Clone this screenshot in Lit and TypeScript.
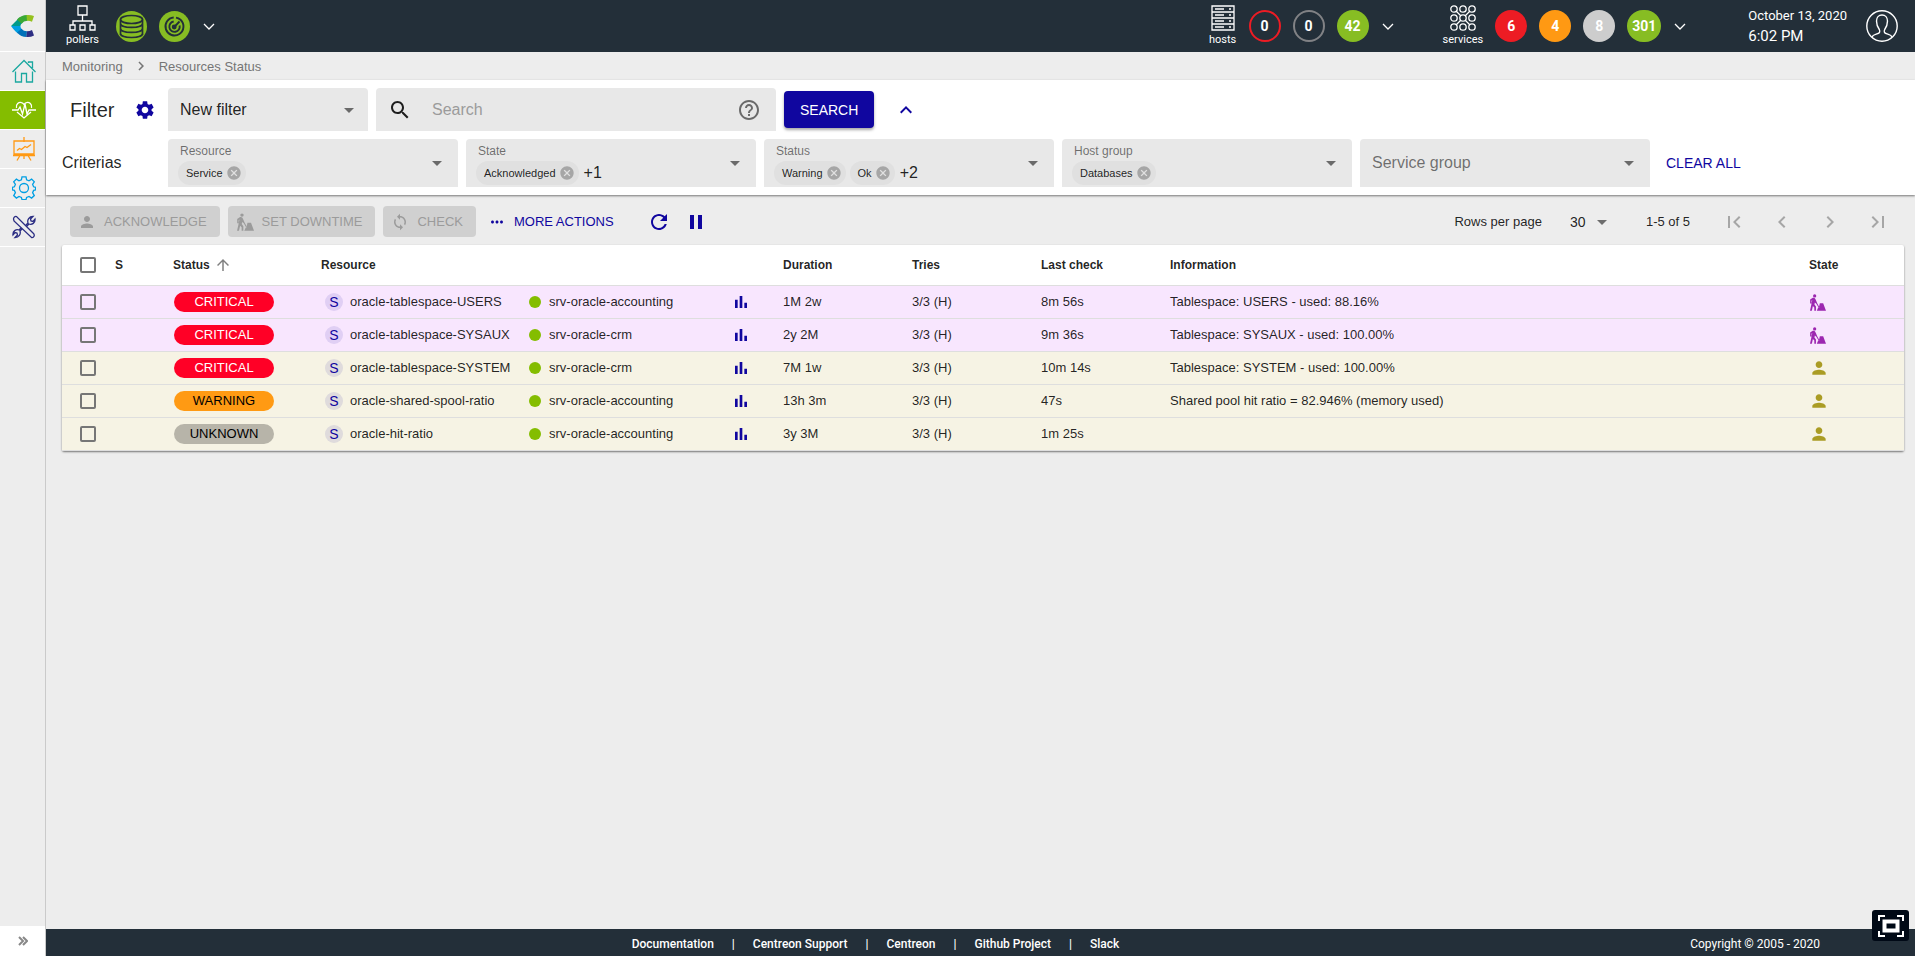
import { LitElement, html, css, svg, nothing, type SVGTemplateResult } from "lit";
import { customElement, property } from "lit/decorators.js";
import { classMap } from "lit/directives/class-map.js";

/* Solid 24-unit glyphs */
const GLYPHS: Record<string, string> = {
  gear: "M19.14 12.94c.04-.3.06-.61.06-.94 0-.32-.02-.64-.07-.94l2.03-1.58c.18-.14.23-.41.12-.61l-1.92-3.32c-.12-.22-.37-.29-.59-.22l-2.39.96c-.5-.38-1.03-.7-1.62-.94l-.36-2.54c-.04-.24-.24-.41-.48-.41h-3.84c-.24 0-.43.17-.47.41l-.36 2.54c-.59.24-1.13.57-1.62.94l-2.39-.96c-.22-.08-.47 0-.59.22L2.74 8.87c-.12.21-.08.47.12.61l2.03 1.58c-.05.3-.09.63-.09.94s.02.64.07.94l-2.03 1.58c-.18.14-.23.41-.12.61l1.92 3.32c.12.22.37.29.59.22l2.39-.96c.5.38 1.03.7 1.62.94l.36 2.54c.05.24.24.41.48.41h3.84c.24 0 .44-.17.47-.41l.36-2.54c.59-.24 1.13-.56 1.62-.94l2.39.96c.22.08.47 0 .59-.22l1.92-3.32c.12-.22.07-.47-.12-.61l-2.01-1.58zM12 15.6c-1.98 0-3.6-1.62-3.6-3.6s1.62-3.6 3.6-3.6 3.6 1.62 3.6 3.6-1.62 3.6-3.6 3.6z",
  search: "M15.5 14h-.79l-.28-.27C15.41 12.59 16 11.11 16 9.5 16 5.91 13.09 3 9.5 3S3 5.91 3 9.5 5.91 16 9.5 16c1.61 0 3.09-.59 4.23-1.57l.27.28v.79l5 4.99L20.49 19l-4.99-5zm-6 0C7.01 14 5 11.99 5 9.5S7.01 5 9.5 5 14 7.01 14 9.5 11.99 14 9.5 14z",
  help: "M11 18h2v-2h-2v2zm1-16C6.48 2 2 6.48 2 12s4.48 10 10 10 10-4.48 10-10S17.52 2 12 2zm0 18c-4.41 0-8-3.59-8-8s3.59-8 8-8 8 3.59 8 8-3.59 8-8 8zm0-14c-2.21 0-4 1.79-4 4h2c0-1.1.9-2 2-2s2 .9 2 2c0 2-3 1.75-3 5h2c0-2.25 3-2.5 3-5 0-2.21-1.79-4-4-4z",
  up: "M7.41 15.41 12 10.83l4.59 4.58L18 14l-6-6-6 6z",
  right: "M10 6 8.59 7.41 13.17 12l-4.58 4.59L10 18l6-6z",
  left: "M15.41 7.41 14 6l-6 6 6 6 1.41-1.41L10.83 12z",
  first: "M18.41 16.59 13.82 12l4.59-4.59L17 6l-6 6 6 6zM6 6h2v12H6z",
  last: "M5.59 7.41 10.18 12l-4.59 4.59L7 18l6-6-6-6zM16 6h2v12h-2z",
  drop: "M7 10l5 5 5-5z",
  cancel: "M12 2C6.47 2 2 6.47 2 12s4.47 10 10 10 10-4.47 10-10S17.53 2 12 2zm5 13.59L15.59 17 12 13.41 8.41 17 7 15.59 10.59 12 7 8.41 8.41 7 12 10.59 15.59 7 17 8.41 13.41 12 17 15.59z",
  person: "M12 12c2.21 0 4-1.79 4-4s-1.79-4-4-4-4 1.79-4 4 1.79 4 4 4zm0 2c-2.67 0-8 1.34-8 4v2h16v-2c0-2.66-5.33-4-8-4z",
  worker: "M8 .5a2.300 2.300 0 1 0 0 4.600A2.300 2.300 0 0 0 8 .5zM5.400 5.400 1.600 7.900V13.500h2V9.200l1-.5-1.400 7L1.400 23.500h2.600l1.500-6.500 2 2v4.500h2.300v-6l-2.100-2.800.6-2.600 2 1.500 3.300 5.600 1.100-.6-3.100-5.700-2.100-4.700C8.800 5.900 7.400 4.900 5.400 5.400zM15.300 13h4.700l4 10.500H11l2-4.300 1.100-.6z",
  sync: "M12 4V1L8 5l4 4V6c3.310 0 6 2.690 6 6 0 1.010-.25 1.970-.7 2.800l1.460 1.460C19.540 15.030 20 13.570 20 12c0-4.420-3.580-8-8-8zm0 14c-3.310 0-6-2.690-6-6 0-1.010.25-1.970.7-2.800L5.240 7.740C4.460 8.970 4 10.430 4 12c0 4.420 3.580 8 8 8v3l4-4-4-4v3z",
  dots: "M6 10c-1.100 0-2 .9-2 2s.9 2 2 2 2-.9 2-2-.9-2-2-2zm12 0c-1.100 0-2 .9-2 2s.9 2 2 2 2-.9 2-2-.9-2-2-2zm-6 0c-1.100 0-2 .9-2 2s.9 2 2 2 2-.9 2-2-.9-2-2-2z",
  refresh: "M17.650 6.350C16.200 4.900 14.210 4 12 4c-4.420 0-7.990 3.580-7.990 8s3.570 8 7.990 8c3.730 0 6.840-2.550 7.730-6h-2.080c-.82 2.330-3.040 4-5.650 4-3.310 0-6-2.690-6-6s2.690-6 6-6c1.660 0 3.140.69 4.220 1.780L13 11h7V4l-2.350 2.350z",
  pause: "M6 19h4V5H6v14zm8-14v14h4V5h-4z",
  arrowUp: "M4 12l1.410 1.410L11 7.830V20h2V7.830l5.580 5.590L20 12l-8-8z",
  chart: "M3 8.500h4v12.500H3zM10 3h4v18h-4zM17 13h4v8h-4z",
};

const glyph = (name: string, size = 24) => html`
  <svg class="glyph" width=${size} height=${size} viewBox="0 0 24 24" aria-hidden="true">
    <path fill="currentColor" d=${GLYPHS[name]}></path>
  </svg>`;

/* Thin outline drawings */
const outline = (body: SVGTemplateResult, w: number, h: number, stroke = 1.5) => html`
  <svg class="glyph" width=${w} height=${h} viewBox="0 0 ${w} ${h}" fill="none"
    stroke="currentColor" stroke-width=${stroke} aria-hidden="true">${body}</svg>`;

const chevron = () => outline(svg`<path d="M1 2l5 5 5-5"/>`, 12, 9, 1.3);

const logo = html`
  <svg class="glyph" width="24" height="24" viewBox="0 0 24 24" aria-hidden="true">
    <path fill="#009a8a" d="M0 12 8.500 3.500 11.500 8.500 Q9.500 10 9.400 12 Z"></path>
    <path fill="#3aa935" d="M6 5.500 Q10 1 16 1 L16.500 6.800 Q12.500 7 10.600 9.800 Z"></path>
    <path fill="#95c11f" d="M15.500 1 Q19.500 .6 23 2 L21 7.800 Q18.800 6.600 16 6.800 Z"></path>
    <path fill="#009fe3" d="M0 12 9.400 12 Q9.500 14 11 15.500 L7 19.500 Q4 17.500 0 12 Z"></path>
    <path fill="#0071b9" d="M6 18.500 10.500 14.800 Q12.500 17.300 16 17.300 L15.500 23 Q10 23 6 18.500 Z"></path>
    <path fill="#2d2e83" d="M16 17.300 Q18.800 17.300 21 16 L23 21.500 Q19.500 23.400 15.300 23 Z"></path>
  </svg>`;

const NAV = [
  { id: "home", label: "Home", art: svg`<path d="M.5 13 12 1.500 23.500 13M16.500 4V3H20.500v6M3.500 12.500V23h6v-8.500h5V23h6V12.500"/>` },
  { id: "monitoring", label: "Monitoring", art: svg`<path d="M0 12h6l2-3 2.500 7L13 6l2 10 2-4h7M4.500 10C3.500 6 7 3.800 9.500 4.600 11 5 12 6.500 12 6.500S13 5 14.500 4.600C17 3.800 20.500 6 19.500 10M5 14l7 6 7-6"/>` },
  { id: "reporting", label: "Reporting", art: svg`<path d="M2 4h20v13H2zM12 0v5M5 13.500l2.500-2 2 1 3.500-3 2 1L19 7.500M1 18.500h22M8 18.500 5 23.500M12 18.500V22M16 18.500l3 5"/>` },
  { id: "configuration", label: "Configuration", art: svg`<circle cx="12" cy="12" r="4.500"/><path d="M10 .8h4l.6 3 2.400 1 2.600-1.700 2.700 2.700-1.700 2.600 1 2.400 2 .5v2.600l-2 .5-1 2.300 1.700 2.900-2.700 2.500-2.600-1.700-2.400 1-.6 2.300h-4l-.6-2.300-2.400-1-2.600 1.700-2.700-2.500 1.700-2.900-1-2.300-2-.5v-2.600l2-.5 1-2.400L1.700 5.800l2.700-2.700L7 4.800l2.400-1z"/>` },
  { id: "administration", label: "Administration", art: svg`<path d="M1.500 4c0-1.500 1.500-3 3-2.500L21.500 18.500c1.500 1.500.5 4.500-2 4L2 6zM14 10l2-2c-1-3 1-6.500 5-6.500L18.500 4l.5 2 2 .5L23 4c.5 4-3 6-6 5l-2 2M10 14l-2 2c1 3-1 6.500-5 6.500L5.500 20 5 18l-2-.5L1 20c-.5-4 3-6 6-5l2-2"/>` },
];

const CRITERIA = [
  { label: "Resource", chips: ["Service"], more: "" },
  { label: "State", chips: ["Acknowledged"], more: "+1" },
  { label: "Status", chips: ["Warning", "Ok"], more: "+2" },
  { label: "Host group", chips: ["Databases"], more: "" },
  { label: "Service group", chips: [], more: "" },
];

interface Row {
  status: "critical" | "warning" | "unknown";
  name: string; host: string; duration: string; check: string; info: string;
  state: "downtime" | "ack";
}
const ROWS: Row[] = [
  { status: "critical", name: "oracle-tablespace-USERS", host: "srv-oracle-accounting", duration: "1M 2w", check: "8m 56s", info: "Tablespace: USERS - used: 88.16%", state: "downtime" },
  { status: "critical", name: "oracle-tablespace-SYSAUX", host: "srv-oracle-crm", duration: "2y 2M", check: "9m 36s", info: "Tablespace: SYSAUX - used: 100.00%", state: "downtime" },
  { status: "critical", name: "oracle-tablespace-SYSTEM", host: "srv-oracle-crm", duration: "7M 1w", check: "10m 14s", info: "Tablespace: SYSTEM - used: 100.00%", state: "ack" },
  { status: "warning", name: "oracle-shared-spool-ratio", host: "srv-oracle-accounting", duration: "13h 3m", check: "47s", info: "Shared pool hit ratio = 82.946% (memory used)", state: "ack" },
  { status: "unknown", name: "oracle-hit-ratio", host: "srv-oracle-accounting", duration: "3y 3M", check: "1m 25s", info: "", state: "ack" },
];

const base = css`
  * { box-sizing: border-box; }
  button { border: 0; background: none; padding: 0; margin: 0; font: inherit; color: inherit; cursor: pointer; display: inline-flex; align-items: center; justify-content: center; }
  input, select { font: inherit; color: inherit; margin: 0; }
  a { color: inherit; text-decoration: none; }
  .glyph { display: block; flex: none; }
`;

@customElement("side-nav")
export class SideNav extends LitElement {
  static styles = [base, css`
    :host { display: flex; flex-direction: column; width: 46px; flex: none; background: #ededed; border-right: 1px solid #cacaca; }
    .logo, .item { display: flex; align-items: center; justify-content: center; border-bottom: 1px solid #fff; }
    .logo { height: 52px; }
    .item { height: 39px; padding-left: 3px; }
    .home { color: #1ba8a0; }
    .monitoring { background: #84bd00; color: #fff; }
    .reporting { color: #ff9913; }
    .configuration { color: #009fe3; }
    .administration { color: #2b2d83; }
    .expand { margin-top: auto; height: 30px; background: #fff; color: #888; }
  `];
  render() {
    return html`
      <a class="logo" href="#" aria-label="Centreon">${logo}</a>
      <nav>${NAV.map((n) => html`
        <a class="item ${n.id}" href="#${n.id}" aria-label=${n.label}>${outline(n.art, 24, 24, 1.3)}</a>`)}
      </nav>
      <button class="expand" aria-label="Expand menu">${outline(svg`<path d="M1 1l4 4-4 4M5 1l4 4-4 4"/>`, 10, 10, 2)}</button>`;
  }
}

@customElement("top-bar")
export class TopBar extends LitElement {
  static styles = [base, css`
    :host { display: flex; align-items: center; height: 52px; padding: 0 17px 0 20px; background: #232f39; color: #fff; font: 11px/14px Roboto, sans-serif; }
    .group { display: flex; align-items: center; gap: 12px; }
    .entry { display: flex; flex-direction: column; align-items: center; gap: 2px; min-width: 28px; }
    .pollers { margin-right: 5px; }
    .disc { width: 31px; height: 31px; border-radius: 50%; background: #87bd23; color: #232f39; }
    .right { margin-left: auto; }
    .services { margin-left: 48px; }
    .count { min-width: 32px; height: 32px; padding: 0 5px; border-radius: 16px; display: flex; align-items: center; justify-content: center; font-size: 14px; font-weight: 700; }
    .ring-red { border: 2px solid #ed1c24; }
    .ring-gray { border: 2px solid #818285; }
    .green { background: #87bd23; }
    .red { background: #ed1c24; }
    .orange { background: #ff9913; }
    .gray { background: #cdcdcd; }
    .more { padding: 8px 1px; }
    .clock { margin: 0 19px 0 61px; font-size: 13px; line-height: 20px; white-space: nowrap; }
    .time { display: block; font-size: 15px; }
  `];
  render() {
    return html`
      <div class="group">
        <a class="entry pollers" href="#pollers">
          ${outline(svg`<path d="M9 1h9v9H9zM13.500 10v6M4 20v-4h19v4M1 20h5v5H1zM11 20h5v5h-5zM21 20h5v5h-5z"/>`, 27, 26, 1.3)}
          <span>pollers</span>
        </a>
        <button class="disc" aria-label="Database status">
          ${outline(svg`<ellipse cx="15.500" cy="8.500" rx="11" ry="4"/><path d="M4.500 8.500V24M26.500 8.500V24M4.500 12.500c0 5.300 22 5.300 22 0M4.500 17.500c0 5.300 22 5.300 22 0M4.500 22.500c0 5.300 22 5.300 22 0"/>`, 31, 31, 1.7)}
        </button>
        <button class="disc" aria-label="Latency status">
          ${outline(svg`<path d="M14.700 6.500A9 9 0 1 0 21.500 8.800M14.700 10.500A5.200 5.200 0 1 0 20.600 14.500M21.500 8.800A9 9 0 0 0 17 6.600"/><path d="M14.300 17 20.500 10.500"/><circle cx="15.200" cy="16" r="1.500"/>`, 31, 31, 1.9)}
        </button>
        <button class="more" aria-label="Poller details">${chevron()}</button>
      </div>
      <div class="group right">
        <a class="entry" href="#hosts">
          ${outline(svg`<path d="M1 1h22v24H1zM1 7h22M1 13h22M1 19h22M4 4h9M4 10h9M4 16h9M4 22h9M18 4h2M18 10h2M18 16h2M18 22h2"/>`, 24, 26, 1.3)}
          <span>hosts</span>
        </a>
        <a class="count ring-red" href="#hosts-down">0</a>
        <a class="count ring-gray" href="#hosts-unreachable">0</a>
        <a class="count green" href="#hosts-up">42</a>
        <button class="more" aria-label="Host details">${chevron()}</button>
      </div>
      <div class="group services">
        <a class="entry" href="#services">
          ${outline(svg`${[4, 13, 22].map((x) => [4, 13, 22].map((y) => svg`<circle cx=${x} cy=${y} r="3.200"/>`))}<path d="M6 6l5 5M20 6l-5 5M6 20l5-5M20 20l-5-5"/>`, 26, 26, 1.3)}
          <span>services</span>
        </a>
        <a class="count red" href="#critical">6</a>
        <a class="count orange" href="#warning">4</a>
        <a class="count gray" href="#unknown">8</a>
        <a class="count green" href="#ok">301</a>
        <button class="more" aria-label="Service details">${chevron()}</button>
      </div>
      <time class="clock" datetime="2020-10-13T18:02">October 13, 2020<span class="time">6:02 PM</span></time>
      <button aria-label="Profile">
        ${outline(svg`<circle cx="16" cy="16" r="15.200"/><path d="M6 27c1-3 6-2.500 7.500-4.500.6-1 .3-2-.2-3C11.500 17 10.500 14 10.500 11c0-3.500 2.200-6 5.500-6s5.500 2.500 5.500 6c0 3-1 6-2.800 8.500-.5 1-.8 2-.2 3C20 24.500 25 24 26 27"/>`, 32, 32, 1.4)}
      </button>`;
  }
}

@customElement("criteria-field")
export class CriteriaField extends LitElement {
  @property() label = "";
  @property() more = "";
  @property({ attribute: false }) chips: string[] = [];
  static styles = [base, css`
    :host { display: flex; align-items: center; flex: 0 1 290px; min-width: 180px; height: 48px; padding: 0 9px 0 12px; background: #e8e8e8; border-radius: 4px 4px 0 0; color: rgba(0,0,0,.87); }
    .body { flex: 1; min-width: 0; }
    .label { display: block; font-size: 12px; line-height: 14px; color: rgba(0,0,0,.54); padding-top: 4px; }
    .values { display: flex; align-items: center; gap: 4px; height: 24px; margin: 3px 0 1px -2px; }
    .chip { display: flex; align-items: center; gap: 3px; height: 24px; padding: 0 4px 0 8px; border-radius: 12px; background: #e0e0e0; font-size: 11px; line-height: 14px; }
    .remove { color: #a6a6a6; }
    .more { padding-left: 1px; font-size: 16px; }
    .entry { flex: 1; width: 0; min-width: 0; border: 0; padding: 0; background: none; outline: none; font-size: 16px; }
    .entry::placeholder { color: rgba(0,0,0,.54); opacity: 1; }
    .wide { width: 100%; }
    .open { color: rgba(0,0,0,.54); }
  `];
  render() {
    const filled = this.chips.length > 0;
    return html`
      <div class="body">
        ${filled ? html`
          <label class="label" for="entry">${this.label}</label>
          <div class="values">
            ${this.chips.map((c) => html`
              <span class="chip">${c}<button class="remove" aria-label="Remove ${c}">${glyph("cancel", 16)}</button></span>`)}
            ${this.more ? html`<span class="more">${this.more}</span>` : nothing}
            <input id="entry" class="entry" type="text" />
          </div>` : html`<input class="entry wide" type="text" aria-label=${this.label} placeholder=${this.label} />`}
      </div>
      <button class="open" aria-label="Open ${this.label}">${glyph("drop", 24)}</button>`;
  }
}

@customElement("filter-panel")
export class FilterPanel extends LitElement {
  static styles = [base, css`
    :host { display: flex; flex-direction: column; gap: 8px; padding: 8px 16px; background: #fff; box-shadow: 0 1px 2px rgba(0,0,0,.5); color: rgba(0,0,0,.87); font-size: 16px; }
    .row { display: flex; align-items: center; gap: 8px; }
    .lead { flex: none; width: 98px; }
    .title { display: flex; align-items: center; justify-content: space-between; padding: 0 4px 0 8px; }
    h1 { margin: 0; font-size: 20px; font-weight: 400; line-height: 24px; }
    .blue { color: #10069f; }
    .field { display: flex; align-items: center; height: 43px; background: #e8e8e8; border-radius: 4px 4px 0 0; }
    .preset { flex: 0 1 200px; display: grid; align-items: center; }
    .preset select { grid-area: 1 / 1; width: 100%; height: 43px; padding: 0 32px 0 12px; border: 0; background: none; appearance: none; }
    .preset .arrow { grid-area: 1 / 1; justify-self: end; padding-right: 7px; color: rgba(0,0,0,.54); pointer-events: none; }
    .query { flex: 0 1 400px; gap: 20px; padding: 0 15px 0 12px; }
    .query input { flex: 1; min-width: 0; border: 0; background: none; outline: none; padding: 0; }
    .query input::placeholder { color: #9b9b9b; opacity: 1; }
    .help { color: rgba(0,0,0,.54); }
    .submit { height: 37px; padding: 0 16px; border-radius: 4px; background: #10069f; color: #fff; font-size: 14px; box-shadow: 0 2px 3px rgba(0,0,0,.35); }
    .fold { padding: 0 12px; }
    .clear { padding: 0 8px; font-size: 14px; white-space: nowrap; }
  `];
  render() {
    return html`
      <form class="row" @submit=${(e: Event) => e.preventDefault()}>
        <div class="lead title"><h1>Filter</h1><button type="button" class="blue" aria-label="Manage filters">${glyph("gear", 22)}</button></div>
        <div class="field preset">
          <select aria-label="Saved filter"><option>New filter</option></select>
          <span class="arrow">${glyph("drop")}</span>
        </div>
        <div class="field query">
          ${glyph("search", 24)}
          <input type="text" aria-label="Search" placeholder="Search" />
          <button type="button" class="help" aria-label="Search help">${glyph("help", 24)}</button>
        </div>
        <button class="submit">SEARCH</button>
        <button type="button" class="fold blue" aria-label="Hide criterias">${glyph("up", 24)}</button>
      </form>
      <div class="row">
        <span class="lead">Criterias</span>
        ${CRITERIA.map((c) => html`<criteria-field .label=${c.label} .chips=${c.chips} .more=${c.more}></criteria-field>`)}
        <button class="clear blue">CLEAR ALL</button>
      </div>`;
  }
}

@customElement("resource-list")
export class ResourceList extends LitElement {
  static styles = [base, css`
    :host { display: block; padding: 11px 11px 24px 16px; color: rgba(0,0,0,.87); font-size: 13px; line-height: 16px; }
    .bar { display: flex; align-items: center; gap: 8px; height: 31px; margin-bottom: 8px; padding-left: 8px; }
    .action { height: 31px; gap: 8px; padding: 0 13px 0 8px; border-radius: 4px; background: #d0d0d0; color: #9b9b9b; cursor: default; white-space: nowrap; }
    .flat { padding-left: 4px; background: none; color: #10069f; cursor: pointer; }
    .blue { display: flex; color: #10069f; }
    .tools { display: flex; align-items: center; gap: 13px; padding-left: 12px; }
    .pager { display: flex; align-items: center; margin-left: auto; padding-right: 14px; white-space: nowrap; }
    .size { display: grid; align-items: center; width: 44px; margin: 0 32px 0 28px; }
    .size select { grid-area: 1 / 1; width: 100%; border: 0; padding: 0; background: none; appearance: none; font-size: 14px; }
    .size .arrow { grid-area: 1 / 1; justify-self: end; color: rgba(0,0,0,.54); pointer-events: none; }
    .steps { display: flex; gap: 24px; margin-left: 32px; color: #a6a6a6; }
    table { width: 100%; table-layout: fixed; border-collapse: separate; border-spacing: 0; background: #fff; box-shadow: 0 1px 2px rgba(0,0,0,.5); border-radius: 2px; }
    th, td { padding: 0 8px; text-align: left; border-bottom: 1px solid #dedede; white-space: nowrap; overflow: hidden; text-overflow: ellipsis; }
    th { height: 41px; font-size: 12px; font-weight: 700; }
    td { height: 33px; }
    .c-pick { width: 45px; } .c-sev { width: 58px; } .c-status { width: 148px; } .c-name { width: 208px; }
    .c-host { width: 204px; } .c-graph { width: 50px; } .c-num { width: 129px; } .c-state { width: 103px; }
    .pick { padding: 0 0 0 18px; }
    .pick input { display: block; appearance: none; width: 16px; height: 16px; border: 2px solid #767676; border-radius: 2px; }
    .line { display: flex; align-items: center; }
    .sort { gap: 4px; color: inherit; font-weight: 700; }
    .sort .glyph { color: #808080; }
    .downtime { background: #f8e6fe; }
    .ack { background: #f6f3e4; }
    .pill { display: block; width: 100px; margin-left: 1px; border-radius: 10px; line-height: 20px; text-align: center; }
    .critical { background: #ff0026; color: #fff; }
    .warning { background: #ff9a13; color: #000; }
    .unknown { background: #b7b4a9; color: #000; }
    .kind { display: inline-flex; align-items: center; justify-content: center; width: 18px; height: 18px; margin: 0 7px 0 4px; border-radius: 50%; background: rgba(16,6,159,.1); color: #10069f; font-size: 14px; }
    .dot { width: 12px; height: 12px; margin-right: 8px; border-radius: 50%; background: #84bd00; }
    .purple { color: #9c27b0; }
    .olive { color: #aa9c24; }
  `];
  render() {
    return html`
      <div class="bar">
        <button class="action" disabled>${glyph("person", 18)}ACKNOWLEDGE</button>
        <button class="action" disabled>${glyph("worker", 18)}SET DOWNTIME</button>
        <button class="action" disabled>${glyph("sync", 18)}CHECK</button>
        <button class="action flat">${glyph("dots", 18)}MORE ACTIONS</button>
        <div class="tools">
          <button class="blue" aria-label="Refresh">${glyph("refresh", 24)}</button>
          <button class="blue" aria-label="Pause auto-refresh">${glyph("pause", 24)}</button>
        </div>
        <div class="pager">
          <label for="size">Rows per page</label>
          <span class="size"><select id="size"><option>30</option></select><span class="arrow">${glyph("drop", 24)}</span></span>
          <span>1-5 of 5</span>
          <div class="steps">
            <button disabled aria-label="First page">${glyph("first")}</button>
            <button disabled aria-label="Previous page">${glyph("left")}</button>
            <button disabled aria-label="Next page">${glyph("right")}</button>
            <button disabled aria-label="Last page">${glyph("last")}</button>
          </div>
        </div>
      </div>
      <table>
        <colgroup>
          <col class="c-pick" /><col class="c-sev" /><col class="c-status" /><col class="c-name" /><col class="c-host" />
          <col class="c-graph" /><col class="c-num" /><col class="c-num" /><col class="c-num" /><col /><col class="c-state" />
        </colgroup>
        <thead>
          <tr>
            <th class="pick"><input type="checkbox" aria-label="Select all" /></th>
            <th>S</th>
            <th><button class="sort">Status ${glyph("arrowUp", 18)}</button></th>
            <th>Resource</th><th></th><th></th>
            <th>Duration</th><th>Tries</th><th>Last check</th><th>Information</th><th>State</th>
          </tr>
        </thead>
        <tbody>
          ${ROWS.map((r) => html`
            <tr class=${classMap({ downtime: r.state === "downtime", ack: r.state === "ack" })}>
              <td class="pick"><input type="checkbox" aria-label="Select ${r.name}" /></td>
              <td></td>
              <td><span class="pill ${r.status}">${r.status.toUpperCase()}</span></td>
              <td><span class="line"><span class="kind">S</span>${r.name}</span></td>
              <td><span class="line"><span class="dot"></span>${r.host}</span></td>
              <td><button class="blue" aria-label="Graph of ${r.name}">${glyph("chart", 16)}</button></td>
              <td>${r.duration}</td>
              <td>3/3 (H)</td>
              <td>${r.check}</td>
              <td>${r.info}</td>
              <td>${r.state === "downtime"
                ? html`<span class="purple">${glyph("worker", 17)}</span>`
                : html`<span class="olive">${glyph("person", 20)}</span>`}</td>
            </tr>`)}
        </tbody>
      </table>`;
  }
}

@customElement("page-footer")
export class PageFooter extends LitElement {
  static styles = [base, css`
    :host { display: flex; align-items: center; justify-content: space-between; height: 27px; padding: 2px 95px 0 0; background: #232f39; color: #fff; font: 500 12px/16px Roboto, sans-serif; }
    ul { display: flex; list-style: none; margin: 0 0 0 32%; padding: 0; white-space: nowrap; }
    li { display: flex; padding: 0 18px; }
    li + li { padding-left: 0; }
    li + li::before { content: "|"; padding-right: 18px; }
    .copy { font-weight: 400; }
  `];
  render() {
    return html`
      <ul>${["Documentation", "Centreon Support", "Centreon", "Github Project", "Slack"].map((t) => html`<li><a href="#">${t}</a></li>`)}</ul>
      <span class="copy">Copyright © 2005 - 2020</span>`;
  }
}

@customElement("app-root")
export class AppRoot extends LitElement {
  static styles = [base, css`
    :host { display: flex; min-height: 100vh; background: #ededed; font-family: "Liberation Sans", Arial, sans-serif; }
    .main { flex: 1; min-width: 0; display: flex; flex-direction: column; }
    .crumbs { display: flex; align-items: center; gap: 9px; height: 28px; padding: 0 16px; font-size: 13px; color: #757575; }
    filter-panel { z-index: 1; }
    page-footer { margin-top: auto; }
    .full { position: fixed; right: 6px; bottom: 15px; width: 37px; height: 31px; border-radius: 3px; background: #000916; color: #fff; }
  `];
  render() {
    return html`
      <side-nav></side-nav>
      <div class="main">
        <top-bar></top-bar>
        <nav class="crumbs" aria-label="Breadcrumb">
          <a href="#monitoring">Monitoring</a>${glyph("right", 18)}<a href="#resources">Resources Status</a>
        </nav>
        <filter-panel></filter-panel>
        <resource-list></resource-list>
        <page-footer></page-footer>
      </div>
      <button class="full" aria-label="Full screen">
        ${outline(svg`<path d="M6.500 6.500h13v9h-13z" stroke-width="4"/><path d="M1 6V1h6M19 1h6v5M25 16v5h-6M7 21H1v-5"/>`, 26, 22, 2)}
      </button>`;
  }
}
